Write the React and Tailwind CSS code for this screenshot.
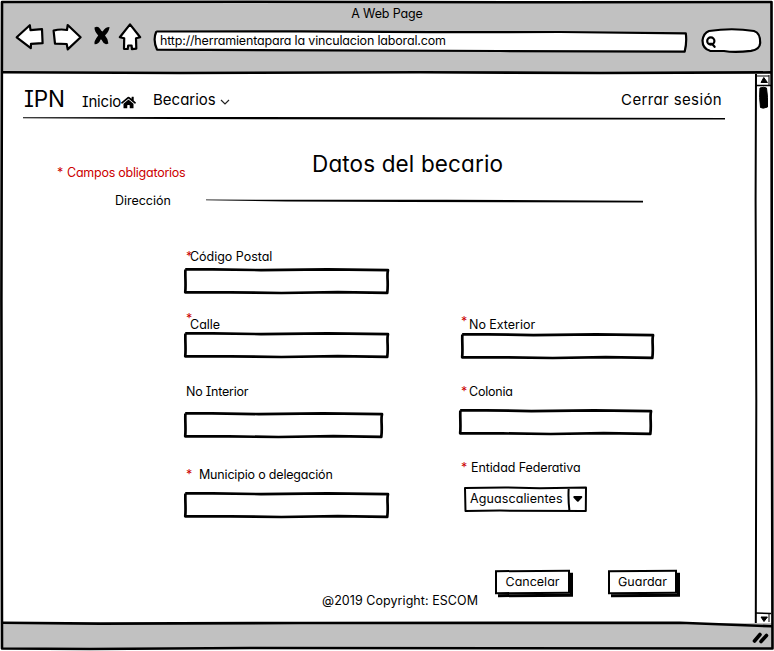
import React from "react";
import { FaHome } from "react-icons/fa";

// Hand-drawn rectangle outline stretched over its positioned parent
function SketchFrame({ width = 2.7 }) {
  return (
    <svg
      className="pointer-events-none absolute inset-0 h-full w-full overflow-visible"
      viewBox="0 0 200 26"
      preserveAspectRatio="none"
      fill="none"
      stroke="#000"
      strokeWidth={width}
      strokeLinejoin="round"
    >
      <path
        vectorEffect="non-scaling-stroke"
        d="M1.2 1.4 L28 1.3 L75 2.1 L140 1.4 L199 2.2 C197.6 8 199.6 14 198.3 24.8 L150 24.2 L95 25 L45 24.4 L1.2 24.3 C2 17 1 9 1.4 1.5"
      />
    </svg>
  );
}

function Star({ className = "" }) {
  return <span className={`inline-block text-[#cc0000] ${className}`}>*</span>;
}

function Field({ className = "" }) {
  return (
    <div className={`relative h-[26px] ${className}`}>
      <input className="h-full w-full bg-transparent px-2 outline-none" />
      <SketchFrame />
    </div>
  );
}

function SketchButton({ children, className = "" }) {
  return (
    <button
      className={`h-[24px] border-2 border-black bg-white leading-4 shadow-[3px_3px_0_#000] -skew-y-[0.3deg] ${className}`}
    >
      {children}
    </button>
  );
}

function BrowserBar() {
  return (
    <header className="h-[71px] shrink-0 bg-[#c1c1c1] pt-[4px]">
      <div className="h-4 text-center leading-4 tracking-[-0.13px]">A Web Page</div>
      <div className="flex h-8 pl-3">
        <svg className="h-8 w-[130px]" viewBox="14 22 130 32" fill="#fff" stroke="#000" strokeWidth="2.2" strokeLinejoin="round" strokeLinecap="round">
          <path d="M16.7 37.3 L29.8 25.2 L30.5 30.2 L42 29.2 L42.6 43.2 L31 43.8 L30.8 48.2 Z" />
          <path d="M53.6 30.6 Q60 28.8 67 30 L67.7 25 L80.6 37.3 L67.7 49.4 L66.7 44 L55 43.6 Z" />
          <path
            d="M94.5 27.6 Q98 25.5 100 28.8 Q101.3 31.4 102.6 31.4 Q105.5 27 109.5 27 Q109.3 31.5 105 35.5 Q108 38.5 108.4 43.5 Q104.5 46 102.3 41 Q101.7 39.5 100.6 39.6 Q98.8 44.5 94.6 44.3 Q93.6 41.5 98.2 35.6 Q94.4 31.5 94.5 27.6 Z"
            fill="#000"
            stroke="none"
          />
          <path d="M130 24.4 L140.2 37.2 L136 38.2 L136.3 48.6 L131.9 49.2 L131.6 45.5 L128.2 45.5 L127.7 49 L124 48.8 L124.2 38.3 L119.8 37.3 Z" />
        </svg>
        <div className="relative ml-[9px] h-full w-[535px]">
          <svg className="absolute inset-0" width="535" height="32" viewBox="153 22 535 32" fill="#fff" stroke="#000" strokeWidth="2.2" strokeLinejoin="round">
            <path d="M156.3 31.5 L300 31.3 L430 32.2 L560 32 L685.8 33.4 Q687 42 684.7 51.6 L500 51 L330 50.4 L157 49.6 Q152.6 40 156.3 31.5" />
          </svg>
          <span className="relative block pl-[7px] pt-[11px] leading-4 tracking-[-0.17px]">http://herramientapara la vinculacion laboral.com</span>
        </div>
        <svg className="ml-3 h-8 w-[63px]" viewBox="700 22 63 32" fill="#fff" stroke="#000" strokeWidth="2.2" strokeLinecap="round">
          <path d="M709 31 Q732 27.5 754 31 Q760.5 33 760.2 43 Q759.8 49.5 751 50.8 Q735 52.8 724 51 L710 50.8 Q702.5 48.5 702.5 40.5 Q703.5 33 709 31 Z" />
          <circle cx="710.8" cy="41" r="3.6" />
          <path d="M709.5 43.8 L712 43.8 L714.6 46.8" fill="none" />
        </svg>
      </div>
    </header>
  );
}

function Nav() {
  return (
    <nav className="flex h-[44px] items-start pl-[22px] text-[15px] leading-5">
      <span className="mt-[12px] w-[58px] text-[22.5px] leading-7 tracking-[-0.2px]">IPN</span>
      <a className="mt-[19px] flex w-[71px] items-center tracking-[-0.2px]">
        Inicio
        <FaHome className="h-[15px] w-[15px]" />
      </a>
      <a className="mt-[17px] flex items-center">
        Becarios
        <svg className="ml-[4px] mt-[3px] h-[6px] w-[10px]" viewBox="0 0 10 6" fill="none" stroke="#222" strokeWidth="1.2">
          <path d="M1 1 L5 5 L9 1" />
        </svg>
      </a>
      <a className="ml-auto mr-[33px] mt-[17px] tracking-[0.37px]">Cerrar sesión</a>
    </nav>
  );
}

function ScrollBar() {
  return (
    <svg className="-ml-px mr-px h-[550px] w-[17px] shrink-0" viewBox="754 73 17 550" fill="none" stroke="#000">
      <path d="M756 74 L755.6 200 L756.3 400 L755.8 623" strokeWidth="2" />
      <path d="M755 85.5 H771 M755 613 L771 613.5" strokeWidth="1.6" />
      <path d="M769 75 V85 M769 614 V622 M757 76 H769" strokeWidth="1" />
      <path d="M763.8 77.5 L767.4 82.5 H761 Z M761 617 H767.4 L764 621.5 Z" fill="#000" />
      <path d="M760 88 Q764 86.5 766.5 88 Q768 97 767.5 107 Q763 109 760.5 107.5 Q759 97 760 88 Z" fill="#000" />
    </svg>
  );
}

function AddressForm() {
  return (
    <form className="flex pl-[182px] leading-4">
      <div className="flex w-[275px] flex-col items-start">
        <label className="ml-[2px] flex h-[19px] tracking-[-0.03px]">
          <Star className="w-[4px]" />Código Postal
        </label>
        <Field className="w-[205px]" />
        <label className="mt-[23px] flex h-[15px] pl-[2px]">
          <Star className="-mt-[6px] w-[4px]" />Calle
        </label>
        <Field className="w-[205px]" />
        <label className="ml-[2px] mt-[26px] h-[28px] tracking-[-0.22px]">No Interior</label>
        <Field className="w-[199px]" />
        <label className="ml-[2px] mt-[29px] flex h-[25px] tracking-[-0.18px]">
          <Star className="w-[13px]" />Municipio o delegación
        </label>
        <Field className="w-[205px]" />
      </div>
      <div className="flex flex-col items-start">
        <label className="ml-[2px] mt-[68px] flex h-[16px] tracking-[-0.03px]">
          <Star className="-mt-[3px] w-[8px]" />No Exterior
        </label>
        <Field className="ml-[2px] w-[193px]" />
        <label className="ml-[2px] mt-[25px] flex h-[25px] tracking-[-0.22px]">
          <Star className="w-[8px]" />Colonia
        </label>
        <Field className="w-[193px]" />
        <label className="ml-[2px] mt-[25px] flex h-[26px] tracking-[-0.1px]">
          <Star className="w-[10px]" />Entidad Federativa
        </label>
        <div className="relative ml-[5px] flex h-[26px] w-[123px] items-center pl-[6px] tracking-[0.1px]">
          Aguascalientes
          <svg className="absolute inset-0" width="123" height="26" viewBox="464 486 123 26" fill="none" stroke="#000" strokeWidth="2" strokeLinejoin="round">
            <path d="M465 488 L505 487.5 L540 488.2 L586 487.5 L585.8 511 L500 510.6 L465.5 511 Z M568.7 488 Q568 500 569.5 511" />
            <path d="M574.3 497 H581.3 L577.8 500.8 Z" fill="#000" />
          </svg>
        </div>
      </div>
    </form>
  );
}

function Page() {
  return (
    <main className="flex flex-1 flex-col">
      <Nav />
      <svg className="ml-[21px] h-[3px] w-[702px]" viewBox="0 0 702 3">
        <path d="M0 .2 L150 0 L400 .2 L702 1 V2.6 L400 2.4 L150 2 L0 1.3 Z" />
      </svg>
      <h1 className="mt-[30px] h-7 pl-[310px] text-[22.5px] leading-7 tracking-[0.14px]">Datos del becario</h1>
      <p className="-mt-[13px] flex pl-[55px] leading-4 tracking-[-0.24px] text-[#cc0000]">
        <span className="w-[10px]">*</span>Campos obligatorios
      </p>
      <div className="mt-[12px] flex h-4 items-center pl-[113px] leading-4">
        <span className="w-[91px] tracking-[-0.03px]">Dirección</span>
        <svg className="h-[4px] w-[437px]" viewBox="0 0 437 4">
          <path d="M0 .4 L60 .8 L240 .8 L437 1.8 V3.4 L200 3 L80 2.5 L0 1.2 Z" />
        </svg>
      </div>
      <div className="h-[40px]" />
      <AddressForm />
      <div className="mt-[52px] flex items-start pl-[320px]">
        <span className="mt-[23px] w-[173px] leading-4 tracking-[0.06px]">@2019 Copyright: ESCOM</span>
        <SketchButton className="w-[75px]">Cancelar</SketchButton>
        <SketchButton className="ml-[38px] w-[69px]">Guardar</SketchButton>
      </div>
    </main>
  );
}

function WindowFrame() {
  return (
    <svg className="pointer-events-none absolute inset-0" width="774" height="651" viewBox="0 0 774 651" fill="none" stroke="#000" strokeWidth="2.6" strokeLinejoin="round">
      <path d="M2 2 L250 1.7 L560 2.3 L771.5 2 L771.8 300 L772.5 648.5 L500 648.2 L250 648 L90 649 L2 648.5 L1.4 300 Z" />
      <path d="M2 72.2 L180 73 L420 72.2 L600 73 L771 72.4" />
      <path d="M2 622.8 L100 623.6 L300 623 L680 622.8 L772 626.3" />
      <path d="M754.5 641 L760 634.5 M761 641.5 L766.5 635.5" strokeWidth="3.6" strokeLinecap="round" />
    </svg>
  );
}

export default function App() {
  return (
    <div className="relative flex h-[651px] w-[774px] flex-col overflow-hidden bg-white p-[2px] font-['Inter','Open_Sans',sans-serif] text-[12.5px] text-black [font-feature-settings:'cv11','cv08']">
      <BrowserBar />
      <div className="flex h-[550px] shrink-0">
        <Page />
        <ScrollBar />
      </div>
      <footer className="h-[26px] shrink-0 bg-[#c1c1c1]" />
      <WindowFrame />
    </div>
  );
}
